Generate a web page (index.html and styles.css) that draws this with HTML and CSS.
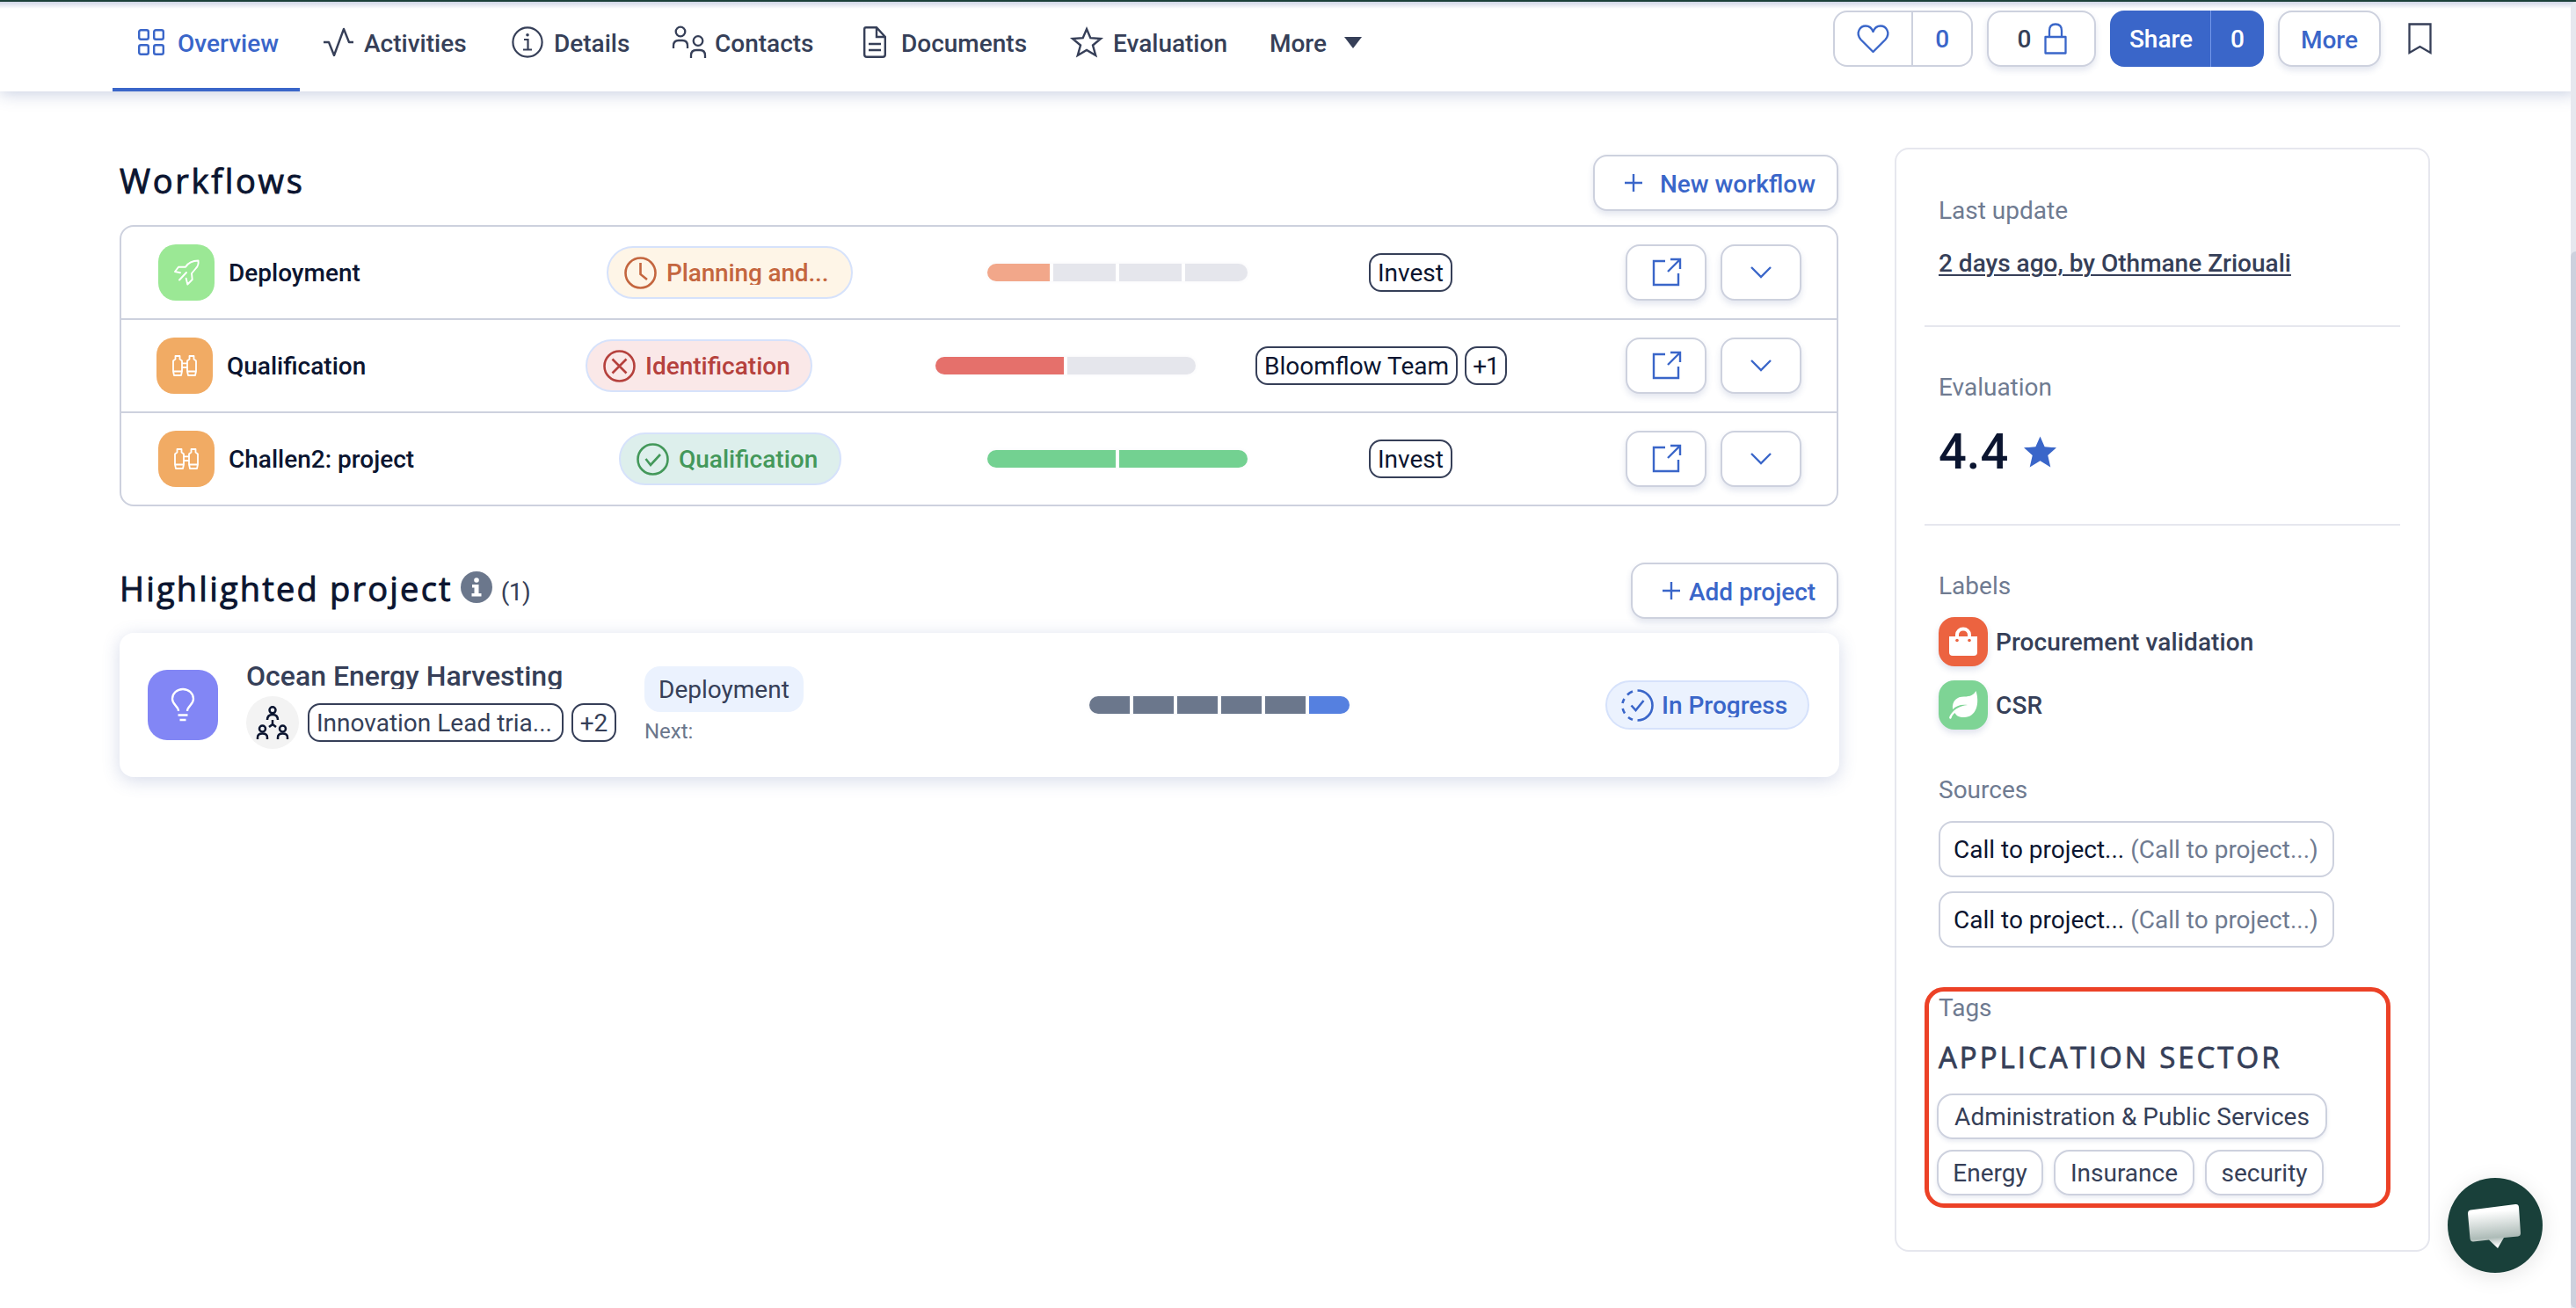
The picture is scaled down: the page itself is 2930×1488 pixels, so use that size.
FILE: index.html
```html
<!DOCTYPE html>
<html lang="en">
<head>
<meta charset="utf-8">
<title>Project overview</title>
<link rel="stylesheet" href="styles.css">
</head>
<body>
<svg class="defs" width="0" height="0">
  <symbol id="ext" viewBox="0 0 34 34"><path d="M15 4H2V31H30V18M21 2H32V13M32 2L18 16" fill="none" stroke="currentColor" stroke-width="2.4"/></symbol>
  <symbol id="chev" viewBox="0 0 26 16"><path d="M2 2L13 13L24 2" fill="none" stroke="currentColor" stroke-width="2.4"/></symbol>
  <symbol id="plus" viewBox="0 0 22 22"><path d="M11 1V21M1 11H21" stroke="currentColor" stroke-width="2.4"/></symbol>
  <symbol id="bino" viewBox="0 0 28 24"><path d="M3.500 1H8.500V4.500L11 6.500V18.500L10 23H2L1 18.500V6.500L3.500 4.500ZM19.500 1H24.500V4.500L27 6.500V18.500L26 23H18L17 18.500V6.500L19.500 4.500ZM1 18.500H11M17 18.500H27M11 9.300H17M11 14H17" fill="none" stroke="#fff" stroke-width="1.800" stroke-linejoin="round"/></symbol>
</svg>
<header class="topbar">
  <nav class="tabs">
    <a class="tab active"><svg class="i-grid" width="30" height="30" viewBox="0 0 30 30"><g fill="none" stroke="currentColor" stroke-width="2.4"><rect x="1.2" y="1.2" width="10.6" height="10.6" rx="2"/><rect x="18.2" y="1.2" width="10.6" height="10.6" rx="2"/><rect x="1.2" y="18.2" width="10.6" height="10.6" rx="2"/><rect x="18.2" y="18.2" width="10.6" height="10.6" rx="2"/></g></svg><span>Overview</span></a>
    <a class="tab t-act"><svg width="36" height="36" viewBox="0 0 36 36"><path d="M1 18H7L13 33L24 3L30 18H35" fill="none" stroke="currentColor" stroke-width="2.4" stroke-linejoin="round"/></svg><span>Activities</span></a>
    <a class="tab t-det"><svg width="36" height="36" viewBox="0 0 36 36"><g fill="none" stroke="currentColor" stroke-width="2.2"><circle cx="18" cy="18" r="16.6"/><path d="M14 15H18.5V26M13 26.5H23"/></g><circle cx="18" cy="9.8" r="1.8" fill="currentColor"/></svg><span>Details</span></a>
    <a class="tab t-con"><svg width="40" height="38" viewBox="0 0 40 38"><g fill="none" stroke="currentColor" stroke-width="2.3"><circle cx="10" cy="7" r="5.3"/><circle cx="30" cy="17.5" r="5.3"/><path d="M2 26V23Q2 17 8 17H12Q18 17 18 23V26M22 37V34Q22 28 28 28H32Q38 28 38 34V37"/></g></svg><span>Contacts</span></a>
    <a class="tab t-doc"><svg width="26" height="36" viewBox="0 0 26 36"><path d="M3 1.2H15L24.8 12V32Q24.8 34.8 22 34.8H4Q1.2 34.8 1.2 32V3Q1.2 1.2 3 1.2ZM15 1.2V12H24.8M6 20H20M6 27H20" fill="none" stroke="currentColor" stroke-width="2.4"/></svg><span>Documents</span></a>
    <a class="tab t-eva"><svg width="36" height="36" viewBox="0 0 36 36"><path d="M18 3L22.3 13.2L34 14L25 21.5L28.2 33L18 27L7.800 33L11 21.500L2 14L13.700 13.200Z" fill="none" stroke="currentColor" stroke-width="2.4"/></svg><span>Evaluation</span></a>
    <a class="tab t-more"><span>More</span><i class="caret"></i></a>
  </nav>
  <div class="actions">
    <div class="split like"><span class="cell heart"><svg width="37" height="33" viewBox="0 0 37 33"><path d="M18.500 31L4.500 17C-2 9 4 1.500 10 1.500C14 1.500 17 4 18.500 8C20 4 23 1.500 27 1.500C33 1.500 39 9 32.500 17Z" fill="none" stroke="currentColor" stroke-width="2.3" stroke-linejoin="round"/></svg></span><span class="cell num">0</span></div>
    <div class="btn lock"><b>0</b><svg width="26" height="36" viewBox="0 0 26 36"><path d="M1.500 16H24.500V34.500H1.500ZM6 16V9Q6 1.500 13 1.500T20 9V16" fill="none" stroke="currentColor" stroke-width="2.3" stroke-linejoin="round"/></svg></div>
    <div class="split share"><span class="cell">Share</span><span class="cell num">0</span></div>
    <div class="btn morebtn"><span>More</span></div>
    <svg class="bookmark" width="27" height="36" viewBox="0 0 27 36"><path d="M1.500 1.500H25.500V34L13.500 27L1.500 34Z" fill="none" stroke="currentColor" stroke-width="2.3"/></svg>
  </div>
</header>
<main class="page">
  <div class="left">
    <div class="head"><h2 class="h-work">Workflows</h2><button class="btn newwf"><svg width="22" height="22"><use href="#plus"/></svg><span>New workflow</span></button></div>
    <section class="table">
      <div class="row">
        <div class="name"><i class="tile green"><svg width="30" height="30" viewBox="0 0 30 30"><path d="M14 8.700C17 4 22 1.500 28.500 1.500C29 5 28 8 26 10L21 16L21.700 23L16.300 28.500L14.700 21.700M14 8.700H6L2 14L8 15.300M15 15L7 23.500" fill="none" stroke="#fff" stroke-width="1.900" stroke-linejoin="round" stroke-linecap="round"/></svg></i><span>Deployment</span></div>
        <div class="status"><span class="pill plan"><svg width="37" height="37" viewBox="0 0 37 37"><g fill="none" stroke="currentColor" stroke-width="2.6"><circle cx="18.500" cy="18.500" r="17"/><path d="M18.500 7V20L26 26"/></g></svg><span>Planning and...</span></span></div>
        <div class="prog"><div class="bar"><i class="s-or"></i><i></i><i></i><i></i></div></div>
        <div class="team"><span class="chip">Invest</span></div>
        <div class="ctl"><button class="btn sq"><svg class="ext" width="34" height="34"><use href="#ext"/></svg></button><button class="btn sq"><svg width="26" height="16"><use href="#chev"/></svg></button></div>
      </div>
      <div class="row wide">
        <div class="name"><i class="tile orange"><svg width="28" height="24"><use href="#bino"/></svg></i><span>Qualification</span></div>
        <div class="status"><span class="pill ident"><svg width="37" height="37" viewBox="0 0 37 37"><g fill="none" stroke="currentColor" stroke-width="2.6"><circle cx="18.500" cy="18.500" r="17"/><path d="M10.500 10.500L26.500 26.500M26.500 10.500L10.500 26.500"/></g></svg><span>Identification</span></span></div>
        <div class="prog"><div class="bar"><i class="s-red"></i><i></i></div></div>
        <div class="team"><span class="chip">Bloomflow Team</span><span class="chip plus1">+1</span></div>
        <div class="ctl"><button class="btn sq"><svg class="ext" width="34" height="34"><use href="#ext"/></svg></button><button class="btn sq"><svg width="26" height="16"><use href="#chev"/></svg></button></div>
      </div>
      <div class="row last">
        <div class="name"><i class="tile orange"><svg width="28" height="24"><use href="#bino"/></svg></i><span>Challen2: project</span></div>
        <div class="status"><span class="pill qual"><svg width="37" height="37" viewBox="0 0 37 37"><g fill="none" stroke="currentColor" stroke-width="2.6"><circle cx="18.500" cy="18.500" r="17"/><path d="M10.500 18L16 25L27 13"/></g></svg><span>Qualification</span></span></div>
        <div class="prog"><div class="bar"><i class="s-gr"></i><i class="s-gr"></i></div></div>
        <div class="team"><span class="chip">Invest</span></div>
        <div class="ctl"><button class="btn sq"><svg class="ext" width="34" height="34"><use href="#ext"/></svg></button><button class="btn sq"><svg width="26" height="16"><use href="#chev"/></svg></button></div>
      </div>
    </section>
    <div class="head head2"><h2 class="h-high">Highlighted project</h2><svg class="info" width="36" height="36" viewBox="0 0 36 36"><circle cx="18" cy="18" r="18" fill="#6b778c"/><circle cx="18" cy="10" r="2.800" fill="#fff"/><path d="M13 15H20.500V25H23.500V28.500H12.500V25H15.500V18.500H13Z" fill="#fff"/></svg><span class="count">(1)</span><button class="btn addp"><svg width="22" height="22"><use href="#plus"/></svg><span>Add project</span></button></div>
    <section class="card">
      <i class="bulb"><svg width="28" height="38" viewBox="0 0 28 38"><path d="M9 26C9 20 2 19 2 12A12 11 0 0 1 26 12C26 19 19 20 19 26M8.500 30.500H19.500M10.500 36H17.500" fill="none" stroke="#fff" stroke-width="2.300"/></svg></i>
      <div class="proj">
        <div class="ptitle">Ocean Energy Harvesting</div>
        <div class="pmeta"><i class="avatar"><svg width="38" height="38" viewBox="0 0 38 38"><g fill="none" stroke="#0b1530" stroke-width="2.500"><circle cx="19" cy="4.800" r="3.500"/><circle cx="7.500" cy="26" r="3.500"/><circle cx="30.500" cy="26" r="3.500"/><path d="M13 16Q13 10 19 10T25 16M2 38V36Q2 31.500 7.500 31.500T13 36V38M25 38V36Q25 31.500 30.500 31.500T36 36V38M19 16V21L15 24M19 21L23 24"/></g></svg></i><span class="chip grey c1">Innovation Lead tria...</span><span class="chip grey c2">+2</span></div>
      </div>
      <div class="stage"><span class="stagepill">Deployment</span><span class="next">Next:</span></div>
      <div class="bar cardbar"><i class="s-sl"></i><i class="s-sl"></i><i class="s-sl"></i><i class="s-sl"></i><i class="s-sl"></i><i class="s-bl"></i></div>
      <span class="pill progress"><svg width="37" height="37" viewBox="0 0 37 37"><g fill="none" stroke="currentColor" stroke-width="2.600"><path d="M18.500 1.500A17 17 0 0 1 18.500 35.500"/><path d="M13 2.500A17 17 0 0 0 7 6.500M3.500 11A17 17 0 0 0 1.500 16M1.700 22A17 17 0 0 0 4 27.500M8 32A17 17 0 0 0 13 34.800"/><path d="M11.500 18.500L16.500 24L25.500 13"/></g></svg><span>In Progress</span></span>
    </section>
  </div>
  <aside class="side">
    <div class="lbl l1">Last update</div>
    <div class="link">2 days ago, by Othmane Zriouali</div>
    <hr>
    <div class="lbl l2">Evaluation</div>
    <div class="score"><span>4.4</span><svg width="37" height="36" viewBox="0 0 36 34"><path d="M18 0L23 11.500L36 12.500L26.500 21L29.500 34L18 27L6.500 34L9.500 21L0 12.500L13 11.500Z" fill="#3a66c9"/></svg></div>
    <hr>
    <div class="lbl l3">Labels</div>
    <div class="label"><i class="lt red"><svg width="32" height="32" viewBox="0 0 32 32"><path d="M0 10H32V28Q32 32 28 32H4Q0 32 0 28Z" fill="#fff"/><path d="M9 12V8A7 6.500 0 0 1 23 8V12" fill="none" stroke="#fff" stroke-width="4"/><circle cx="9" cy="14.500" r="1.800" fill="#ec6340"/><circle cx="23" cy="14.500" r="1.800" fill="#ec6340"/></svg></i><span>Procurement validation</span></div>
    <div class="label"><i class="lt grn"><svg width="34" height="34" viewBox="0 0 34 34"><path d="M31.500 1C36 15 32 31 18 31C12 31 9 29 7.500 26C5 28 4 30 3.500 32C2 34 0.500 32 1.500 30C5 23 12 18 22 17C14 16 9 18 5 22C4 12 10 7.500 18 7.500C25 7.500 29 5.500 31.500 1Z" fill="#fff"/></svg></i><span>CSR</span></div>
    <div class="lbl l4">Sources</div>
    <div class="src"><span>Call to project...</span><em>(Call to project...)</em></div>
    <div class="src"><span>Call to project...</span><em>(Call to project...)</em></div>
    <div class="tagbox">
      <div class="lbl">Tags</div>
      <div class="sector">APPLICATION SECTOR</div>
      <div class="tags"><span class="tag g1">Administration &amp; Public Services</span><span class="tag g2">Energy</span><span class="tag g3">Insurance</span><span class="tag g4">security</span></div>
    </div>
  </aside>
</main>
<div class="scroll"><i></i></div>
<div class="chat"><svg width="64" height="54" viewBox="0 0 64 54"><defs><linearGradient id="bub" x1="0" y1="0" x2="0.100" y2="1"><stop offset="0.200" stop-color="#fff"/><stop offset="0.800" stop-color="#adbbb7"/><stop offset="1" stop-color="#fff"/></linearGradient></defs><path d="M4 9.500L55 3Q58.500 2.500 59 6L61 36Q61 39 58 39.500L42 41L35 53L25 43.500L7 45.500Q4 45.500 3.500 42L1 13.500Q1 10 4 9.500Z" fill="url(#bub)"/></svg></div>
</body>
</html>
```
FILE: styles.css
```css
* { box-sizing: border-box; }
body { margin: 0; width: 2930px; height: 1488px; overflow: hidden; position: relative; background: #fff; font: 400 28px/32px Roboto, sans-serif; color: #0b1530; }
svg { display: block; flex: none; overflow: visible; }
.defs { position: absolute; }
i, em { font-style: normal; }
h2 { margin: 0; padding-bottom: 7px; font: 500 38px/48px "Open Sans", sans-serif; white-space: nowrap; -webkit-text-stroke: 0.9px currentColor; }

.topbar { position: relative; height: 104px; border-top: 2px solid #1b4039; display: flex; justify-content: space-between; background: linear-gradient(#cfd5e6 0, #fff 8px); box-shadow: 0 2px 18px rgba(70, 95, 160, .32); }
.tabs { display: flex; margin-left: 128px; color: #363f58; font-weight: 500; }
.tab { display: flex; align-items: center; height: 102px; padding-bottom: 10px; white-space: nowrap; }
.tab span { padding-top: 3px; }
.active { width: 213px; padding-left: 29px; color: #3a66c9; border-bottom: 4px solid #3a66c9; padding-bottom: 6px; gap: 15px; }
.t-act { margin-left: 26px; gap: 11px; width: 215px; }
.t-det { gap: 12px; width: 182px; }
.t-con { gap: 9px; width: 218px; }
.t-doc { gap: 17px; width: 236px; }
.t-eva { gap: 12px; width: 226px; }
.t-more { gap: 20px; }
.caret { border: 10px solid transparent; border-top: 13px solid #363f58; border-bottom: 0; }
.actions { display: flex; padding-top: 10px; margin-right: 164px; font-weight: 500; color: #3a66c9; }
.btn { display: flex; align-items: center; justify-content: center; height: 64px; padding: 0; font: 500 28px/32px Roboto, sans-serif; color: #3a66c9; background: #fff; border: 2px solid #cdd1de; border-radius: 16px; box-shadow: 0 4px 7px rgba(60, 80, 140, .14); white-space: nowrap; }
.btn span { padding-top: 3px; }
.split { display: flex; height: 64px; border-radius: 16px; }
.cell { display: flex; align-items: center; justify-content: center; padding-top: 2px; }
.like { width: 159px; border: 2px solid #cdd1de; margin-right: 16px; }
.like .heart { width: 90px; border-right: 2px solid #cdd1de; padding-top: 0; }
.like .num { width: 66px; }
.lock { width: 124px; gap: 15px; margin-right: 16px; padding-left: 2px; }
.lock b { font-weight: 500; color: #363f58; padding-top: 2px; }
.share { width: 175px; margin-right: 16px; background: #3a66c9; color: #fff; }
.share .cell { width: 115px; border-right: 1px solid #7296e8; padding-left: 2px; }
.share .num { width: 60px; border: 0; padding-left: 0; }
.morebtn { width: 117px; margin-right: 31px; }
.bookmark { margin-top: 14px; color: #363f58; }

.page { display: flex; align-items: flex-start; padding: 64px 0 0 136px; }
.left { width: 1955px; margin-right: 64px; }
.head { display: flex; align-items: center; height: 64px; margin-top: 8px; }
.h-work { letter-spacing: 2.7px; }
.h-high { letter-spacing: 2.2px; }
.head .btn { margin-left: auto; }
.newwf { width: 279px; gap: 19px; padding-left: 9px; }
.addp { width: 236px; gap: 9px; padding-left: 9px; }
.table { margin-top: 16px; border: 2px solid #cdd1de; border-radius: 16px; height: 320px; }
.row { position: relative; display: flex; align-items: center; height: 106px; border-bottom: 2px solid #cdd1de; padding-left: 42px; }
.last { border: 0; height: 104px; }
.wide { padding-left: 40px; }
.name { display: flex; align-items: center; gap: 16px; font-weight: 500; width: 484px; white-space: nowrap; }
.tile { display: flex; align-items: center; justify-content: center; width: 64px; height: 64px; border-radius: 20px; }
.green { background: #9be895; }
.orange { background: #f1ab64; }
.name span { padding-top: 2px; }
.status { width: 459px; padding-left: 26px; }
.last .status { padding-left: 40px; }
.wide .status { width: 402px; padding-left: 4px; }
.pill { display: inline-flex; align-items: center; height: 60px; border: 2px solid #d6e2fb; border-radius: 30px; padding-left: 18px; font-weight: 500; white-space: nowrap; vertical-align: middle; }
.pill span { margin-left: 11px; line-height: 32px; padding-top: 2px; }
.pill.plan span, .pill.progress span { height: 28px; line-height: 28px; padding-top: 1px; overflow: hidden; }
.plan { width: 280px; background: #fef5e7; color: #c4663f; letter-spacing: -.15px; }
.ident { width: 258px; background: #fae8e8; color: #b5413d; }
.qual { width: 253px; background: #ddefec; color: #43985a; }
.bar { display: flex; gap: 4px; width: 296px; height: 20px; border-radius: 10px; overflow: hidden; box-shadow: 0 0 4px rgba(100, 110, 160, .06); }
.bar i { flex: 1; background: #e5e6ec; }
.bar .s-or { background: #f2a78a; }
.bar .s-red { background: #e5706b; }
.bar .s-gr { background: #73d191; }
.bar .s-sl { background: #6b778c; }
.bar .s-bl { background: #5580e0; }
.prog { width: 434px; }
.wide .prog { width: 364px; }
.team { display: flex; gap: 8px; width: 292px; }
.wide .team { width: 421px; }
.chip { display: flex; align-items: center; height: 44px; border: 2px solid #363f58; border-radius: 14px; padding: 2px 8px 0; white-space: nowrap; }
.plus1 { width: 48px; padding: 2px 0 0; justify-content: center; letter-spacing: -1px; }
.ctl { display: flex; gap: 16px; }
.sq { width: 92px; }
.ext { margin-left: 2px; }

.head2 { margin-top: 64px; }
.info { margin: -8px 10px 0 9px; }
.count { color: #363f58; padding-top: 3px; letter-spacing: -.6px; }
.card { display: flex; margin-top: 16px; height: 164px; width: 1956px; border-radius: 16px; background: #fff; box-shadow: 0 4px 20px rgba(70, 90, 160, .22); padding-left: 32px; }
.bulb { display: flex; align-items: center; justify-content: center; width: 80px; height: 80px; margin: 42px 32px 0 0; border-radius: 22px; background: #8286f5; }
.proj { width: 453px; padding-top: 32px; }
.ptitle { font-weight: 500; font-size: 32px; line-height: 34px; height: 32px; overflow: hidden; color: #363f58; white-space: nowrap; }
.pmeta { display: flex; align-items: center; margin-top: 8px; }
.avatar { display: flex; align-items: center; justify-content: center; width: 60px; height: 60px; border-radius: 50%; background: #f3f3f3; }
.grey { color: #363f58; }
.c1 { width: 291px; margin: 0 9px 0 10px; }
.c2 { width: 51px; padding: 2px 0 0; justify-content: center; }
.stage { width: 506px; padding-top: 38px; display: flex; flex-direction: column; align-items: flex-start; }
.stagepill { height: 52px; line-height: 54px; padding: 0 16px; border-radius: 18px; background: #ebf2fe; color: #363f58; }
.next { font-size: 24px; line-height: 28px; color: #6b778c; margin-top: 8px; }
.cardbar { margin: 72px 291px 0 0; }
.progress { height: 56px; width: 232px; margin-top: 54px; padding-left: 16px; background: #ebf2fe; color: #3a66c9; }
.pill.progress span { margin-left: 9px; }

.side { width: 609px; height: 1256px; border: 2px solid #e6e7ee; border-radius: 16px; padding: 0 32px; }
.side hr { border: 0; height: 2px; background: #e6e7ee; margin: 0; width: 541px; }
.side > div { margin-left: 16px; }
.lbl { height: 32px; color: #6f7b91; }
.l1 { margin-top: 54px; }
.link { margin-top: 28px; height: 86px; font-weight: 500; color: #363f58; text-decoration: underline; text-underline-offset: 3px; text-decoration-thickness: 2px; white-space: nowrap; }
.l2 { margin-top: 53px; }
.side > .score { display: flex; align-items: center; height: 64px; gap: 18px; margin: 25px 0 50px 16px; font: 500 56px/64px Roboto, sans-serif; }
.l3 { margin-top: 53px; }
.label { display: flex; align-items: center; gap: 9px; height: 56px; margin-top: 16px; font-weight: 500; color: #363f58; letter-spacing: .1px; }
.label span { padding-top: 2px; }
.l3 + .label { margin-top: 19px; }
.lt { display: flex; align-items: center; justify-content: center; width: 56px; height: 56px; border-radius: 18px; box-shadow: 0 4px 7px rgba(60, 80, 140, .16); }
.red { background: #ec6340; }
.grn { background: #7ed495; }
.l4 { margin-top: 53px; }
.src { display: flex; align-items: center; gap: 7px; width: 450px; height: 64px; margin-top: 16px; padding: 2px 0 0 15px; border: 2px solid #cdd1de; border-radius: 16px; white-space: nowrap; }
.l4 + .src { margin-top: 19px; }
.src em { color: #6f7b91; }
.side > .tagbox { margin: 45px 0 0 0; width: 530px; height: 251px; border: 5px solid #ec4126; border-radius: 22px; padding: 3px 0 0 11px; }
.tagbox .lbl { margin: 0; }
.sector { font: 500 33px/40px "Open Sans", sans-serif; letter-spacing: 3px; color: #363f58; margin-top: 20px; white-space: nowrap; -webkit-text-stroke: 0.8px currentColor; }
.tags { display: flex; flex-wrap: wrap; gap: 12px; margin: 21px 0 0 -2px; }
.tag { display: flex; align-items: center; justify-content: center; height: 52px; padding-top: 2px; border: 2px solid #cdd1de; border-radius: 18px; color: #363f58; box-shadow: 0 3px 4px rgba(60, 80, 140, .1); white-space: nowrap; }
.g1 { width: 444px; }
.g2 { width: 121px; }
.g3 { width: 160px; }
.g4 { width: 135px; }

.scroll { position: absolute; top: 2px; right: 0; width: 6px; height: 1486px; background: #e6e8ef; border-radius: 6px 0 0 0; }
.scroll i { display: block; margin-top: 284px; height: 1202px; background: #cdd1de; border-radius: 6px 0 0 6px; }
.chat { position: absolute; left: 2784px; top: 1340px; width: 108px; height: 108px; border-radius: 50%; background: #19403a; display: flex; align-items: center; justify-content: center; box-shadow: 0 4px 24px rgba(0, 0, 0, .1); }
```
